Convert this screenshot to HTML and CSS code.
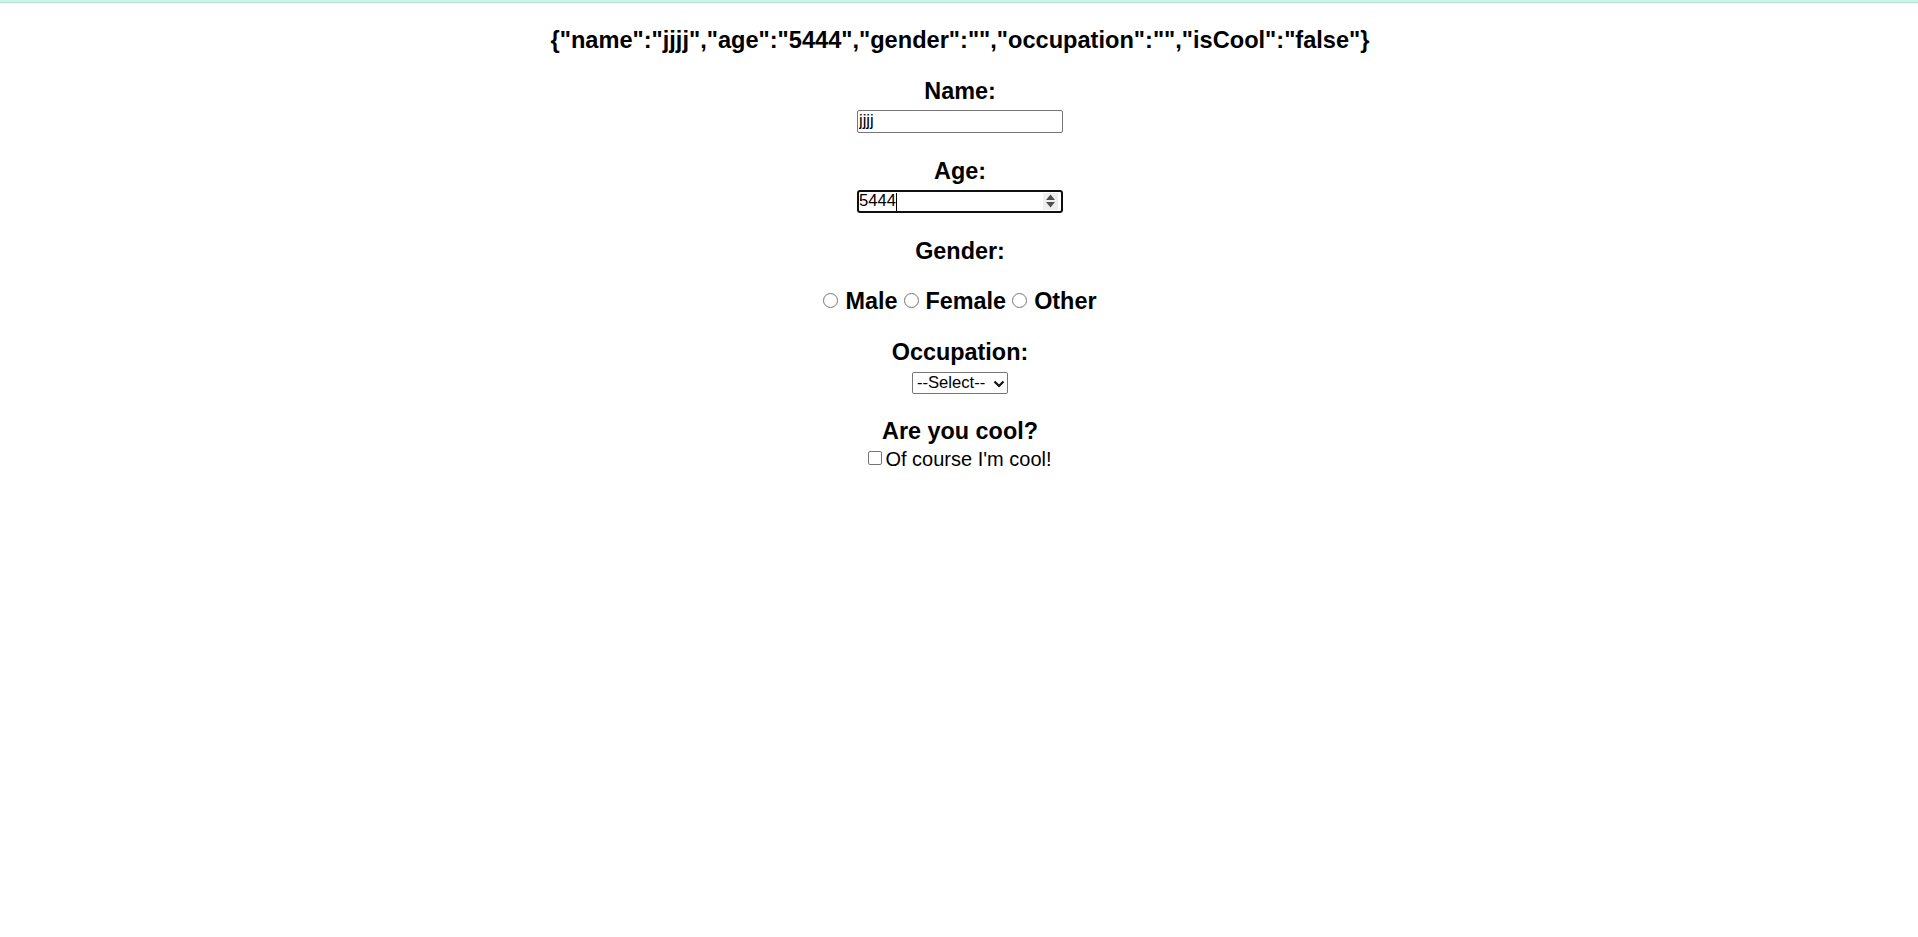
FILE: index.html
```html
<!DOCTYPE html>
<html lang="en">
<head>
<meta charset="utf-8">
<title>Form</title>
<link rel="stylesheet" href="styles.css">
</head>
<body>
<div class="topbar"></div>
<main class="app">
  <h3 class="json">{"name":"jjjj","age":"5444","gender":"","occupation":"","isCool":"false"}</h3>
  <form class="form">
    <label class="label label-first" for="name">Name:</label>
    <input class="text-input" id="name" type="text" value="jjjj">

    <label class="label" for="age">Age:</label>
    <div class="age-wrap">
      <input class="text-input focused" id="age" type="text" value="5444">
      <span class="caret"></span>
      <span class="spinner">
        <svg width="11" height="16" viewBox="0 0 11 16"><path d="M5.5 1.5 L10 7 H1 Z M1 9 H10 L5.5 14.5 Z" fill="#505050"/></svg>
      </span>
    </div>

    <div class="label label-gender">Gender:</div>
    <div class="radios">
      <input class="radio" type="radio" name="gender" id="male"><label class="radio-label" for="male">Male</label>
      <input class="radio" type="radio" name="gender" id="female"><label class="radio-label" for="female">Female</label>
      <input class="radio" type="radio" name="gender" id="other"><label class="radio-label" for="other">Other</label>
    </div>

    <label class="label label-occ" for="occ">Occupation:</label>
    <div class="select-wrap">
      <select class="select" id="occ">
        <option>--Select--</option>
      </select>
      <svg class="chevron" width="12" height="8" viewBox="0 0 12 8"><path d="M1.5 1.5 L6 6 L10.5 1.5" fill="none" stroke="#111" stroke-width="2.2"/></svg>
    </div>

    <div class="label label-cool">Are you cool?</div>
    <div class="check-row">
      <input class="check" type="checkbox" id="cool"><label class="check-label" for="cool">Of course I'm cool!</label>
    </div>
  </form>
</main>
</body>
</html>
```

FILE: styles.css
```css
html, body {
  margin: 0;
  padding: 0;
  background: #ffffff;
}

body {
  font-family: "Liberation Sans", Arial, sans-serif;
  color: #000000;
}

.topbar {
  height: 2px;
  background: #cdf5e6;
  border-bottom: 1px solid #b2e4d1;
}

.app {
  display: flex;
  flex-direction: column;
  align-items: center;
  text-align: center;
  padding-left: 2px;
}

.json {
  margin: 23px 0 0 0;
  font-size: 23.6px;
  font-weight: 700;
  line-height: 28px;
}

.form {
  display: flex;
  flex-direction: column;
  align-items: center;
}

.label {
  display: block;
  font-size: 23.4px;
  font-weight: 700;
  line-height: 28px;
  margin-top: 24px;
  margin-bottom: 5px;
}

.label-first {
  margin-top: 22.5px;
}

.label-gender {
  margin-bottom: 0;
}

.text-input {
  box-sizing: border-box;
  width: 206px;
  height: 23px;
  margin: 0;
  padding: 0 1px;
  border: 1px solid #767676;
  border-radius: 2px;
  font-family: "Liberation Sans", Arial, sans-serif;
  font-size: 16.6px;
  color: #000;
  background: #fff;
  outline: none;
}

.text-input.focused {
  border: 2px solid #101010;
  border-radius: 3px;
  padding: 0;
}

.age-wrap {
  position: relative;
  width: 206px;
  height: 23px;
}

.caret {
  position: absolute;
  left: 39px;
  top: 3px;
  width: 1px;
  height: 18px;
  background: #000;
}

.spinner {
  position: absolute;
  right: 5px;
  top: 3px;
  width: 15px;
  height: 17px;
  background: #efefef;
  display: flex;
  align-items: center;
  justify-content: center;
}

.radios {
  display: flex;
  align-items: center;
  justify-content: center;
  margin-top: 22px;
  height: 28px;
}

.radio {
  appearance: none;
  -webkit-appearance: none;
  box-sizing: border-box;
  width: 15px;
  height: 15px;
  margin: 0 7px 0 6px;
  border: 1px solid #767676;
  border-radius: 50%;
  background: #fff;
}

.radio:first-child {
  margin-left: 0;
}

.radio-label {
  font-size: 23.4px;
  font-weight: 700;
  line-height: 28px;
}

.label-occ {
  margin-top: 23px;
  margin-bottom: 6px;
}

.select-wrap {
  position: relative;
  width: 96px;
  height: 22px;
}

.select {
  appearance: none;
  -webkit-appearance: none;
  box-sizing: border-box;
  width: 96px;
  height: 22px;
  margin: 0;
  padding: 0 0 0 4px;
  border: 1px solid #767676;
  border-radius: 2px;
  background: #fff;
  font-family: "Liberation Sans", Arial, sans-serif;
  font-size: 16.6px;
  color: #000;
  text-align: left;
}

.chevron {
  position: absolute;
  right: 3px;
  top: 8px;
  pointer-events: none;
}

.label-cool {
  margin-top: 23px;
  margin-bottom: 0;
}

.check-row {
  display: flex;
  align-items: center;
  justify-content: center;
  height: 27px;
  margin-top: 1.5px;
}

.check {
  appearance: none;
  -webkit-appearance: none;
  box-sizing: border-box;
  width: 14px;
  height: 14px;
  margin: -4px 3px 0 0;
  border: 1px solid #767676;
  border-radius: 2px;
  background: #fff;
}

.check-label {
  font-family: "Liberation Sans", Arial, sans-serif;
  font-size: 20px;
  font-weight: 400;
  line-height: 27px;
}
```
